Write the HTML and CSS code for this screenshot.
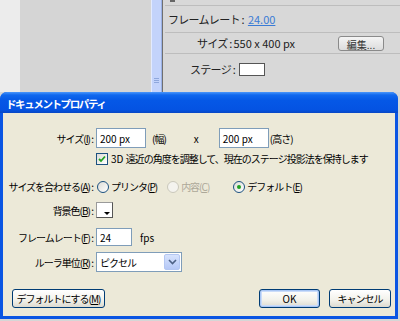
FILE: index.html
```html
<!DOCTYPE html>
<html lang="ja">
<head>
    <meta charset="UTF-8">
    <title>ドキュメントプロパティ</title>
    <link rel="stylesheet" href="styles.css">
</head>
<body>

    <div class="desk">
        <div class="strip"></div>
        <div class="side"></div>
        <div class="scroll"><span class="grip"></span></div>
        <div class="divider"></div>
        <div class="props">
            <div class="prop-head"><span class="head-mark"></span></div>
            <div class="prop-row rate">フレームレート : <a class="link">24.00</a></div>
            <div class="prop-row size">
                <span class="size-text">サイズ : <span class="num">550 x 400 px</span></span>
                <button class="edit">編集...</button>
            </div>
            <div class="prop-row stage">ステージ : <span class="stage-box"></span></div>
        </div>
    </div>

    <div class="dialog">
        <div class="titlebar">ドキュメントプロパティ</div>
        <div class="body">
            <div class="row r-size">
                <span class="lbl">サイズ(<u>I</u>) :</span>
                <span class="field w50">200 px</span>
                <span class="unit">(幅)</span>
                <span class="times">x</span>
                <span class="field w50">200 px</span>
                <span class="unit2">(高さ)</span>
            </div>
            <div class="row r-check">
                <span class="check"><svg width="8" height="8" viewBox="0 0 8 8"><path d="M1 4 L3 6 L7 1.5" fill="none" stroke="#21a121" stroke-width="1.8"/></svg></span>
                <span><span class="num">3D </span>遠近の角度を調整して、現在のステージ投影法を保持します</span>
            </div>
            <div class="row r-fit">
                <span class="lbl">サイズを合わせる(<u>A</u>) :</span>
                <span class="radio"></span><span class="opt">プリンタ(<u>P</u>)</span>
                <span class="radio off"></span><span class="opt dim">内容(<u>C</u>)</span>
                <span class="radio on"></span><span class="opt">デフォルト(<u>E</u>)</span>
            </div>
            <div class="row r-bg">
                <span class="lbl">背景色(<u>B</u>) :</span>
                <span class="swatch"><span class="tri"></span></span>
            </div>
            <div class="row r-fps">
                <span class="lbl">フレームレート(<u>F</u>) :</span>
                <span class="field w36">24</span>
                <span class="fps">fps</span>
            </div>
            <div class="row r-ruler">
                <span class="lbl">ルーラ単位(<u>R</u>) :</span>
                <span class="select">ピクセル
                    <span class="drop"><svg width="9" height="6" viewBox="0 0 9 6"><path d="M1 1 L4.5 4.5 L8 1" fill="none" stroke="#4d6185" stroke-width="1.6"/></svg></span>
                </span>
            </div>
            <div class="buttons">
                <button class="btn w-def">デフォルトにする(<u>M</u>)</button>
                <span class="spacer"></span>
                <button class="btn ok">OK</button>
                <button class="btn cancel">キャンセル</button>
            </div>
        </div>
    </div>

</body>
</html>
```

FILE: styles.css
```css
* {
    box-sizing: border-box;
}
body {
    margin: 0;
    width: 400px;
    height: 321px;
    overflow: hidden;
    background-color: #d6d6d6;
    font-family: "Noto Sans CJK JP", sans-serif;
    font-size: 10px;
    letter-spacing: -1px;
    color: #000;
}
u {
    text-decoration: underline;
}
.num {
    letter-spacing: 0;
}

/* fondo: panel de propiedades */
.desk {
    display: flex;
    height: 92px;
}
.strip {
    width: 20px;
    background-color: #ececec;
}
.side {
    width: 131px;
    background-color: #d5d5d5;
}
.scroll {
    width: 11px;
    background-color: #c3d3fb;
    border-left: 1px solid #e2eaff;
    border-right: 1px solid #9bb2e6;
    display: flex;
    justify-content: center;
    align-items: flex-end;
    padding-bottom: 9px;
}
.grip {
    width: 5px;
    height: 5px;
    border-top: 1px solid #8ea7dc;
    border-bottom: 1px solid #8ea7dc;
    background: linear-gradient(#c3d3fb 1px, #8ea7dc 1px, #8ea7dc 2px, #c3d3fb 2px);
}
.divider {
    width: 3px;
    background-color: #d8d8d8;
    border-left: 1px solid #707070;
}
.props {
    flex: 1;
    background-color: #d8d8d8;
    color: #222;
    font-size: 11px;
    letter-spacing: -0.7px;
}
.prop-head {
    height: 6px;
    border-bottom: 1px solid #bdbdbd;
    padding-left: 5px;
}
.head-mark {
    display: block;
    width: 5px;
    height: 2px;
    background-color: #666;
}
.prop-row {
    display: flex;
    align-items: center;
    border-bottom: 1px solid #bdbdbd;
}
.rate {
    height: 27px;
    padding-left: 3px;
}
.link {
    color: #3a7bd5;
    text-decoration: underline;
    margin-left: 4px;
    letter-spacing: 0;
}
.size {
    height: 21px;
    padding-left: 32px;
    padding-right: 16px;
    justify-content: space-between;
}
.edit {
    font-family: inherit;
    font-size: 10px;
    letter-spacing: 0;
    width: 46px;
    height: 15px;
    padding: 0;
    background: linear-gradient(#f4f4f4, #dcdcdc);
    border: 1px solid #8a8a8a;
    border-radius: 3px;
    color: #333;
}
.stage {
    border-bottom: none;
    height: 30px;
    padding-left: 25px;
}
.stage-box {
    width: 26px;
    height: 13px;
    margin-left: 4px;
    background-color: #fff;
    border: 1px solid #555;
}

/* ventana de dialogo */
.dialog {
    width: 398px;
    height: 227px;
    background-color: #0a55e3;
    border-radius: 7px 7px 0 0;
    display: flex;
    flex-direction: column;
    padding: 0 3px 3px;
}
.titlebar {
    height: 21px;
    margin: 0 -3px;
    padding-left: 6px;
    padding-top: 2px;
    border-radius: 7px 7px 0 0;
    background: linear-gradient(#4a97fb, #1068ee 3px, #0558e6 40%, #0453e2 85%, #0847c4);
    color: #fff;
    font-weight: bold;
    font-size: 10.5px;
    letter-spacing: -1.4px;
    display: flex;
    align-items: center;
}
.body {
    flex: 1;
    background-color: #ece9d8;
    padding-top: 15px;
}
.row {
    display: flex;
    align-items: center;
}
.lbl {
    width: 90px;
    margin-right: 3px;
    text-align: right;
    white-space: nowrap;
}
.field {
    height: 20px;
    background-color: #fff;
    border: 1px solid #7f9db9;
    padding-left: 3px;
    display: flex;
    align-items: center;
    letter-spacing: 0;
}
.w50 {
    width: 50px;
}
.w36 {
    width: 36px;
    height: 18px;
}
.unit {
    margin-left: 6px;
}
.times {
    margin-left: 28px;
    margin-right: 21px;
}
.unit2 {
    margin-left: 1px;
}
.r-size {
    height: 20px;
}
.r-check {
    margin-top: 4px;
    height: 13px;
    padding-left: 93px;
}
.check {
    width: 12px;
    height: 12px;
    margin-right: 3px;
    border: 1px solid #1c5180;
    background: linear-gradient(135deg, #dcdcd6, #fff);
    display: flex;
    align-items: center;
    justify-content: center;
}
.r-fit {
    margin-top: 15px;
    height: 13px;
}
.radio {
    width: 12px;
    height: 12px;
    margin-left: 1px;
    margin-right: 2px;
    border: 1px solid #1c5180;
    border-radius: 50%;
    background: linear-gradient(135deg, #dcdcd6, #fff);
    display: flex;
    align-items: center;
    justify-content: center;
}
.radio.off {
    border-color: #cac8bb;
    background: #f4f3ee;
    margin-left: 10px;
}
.radio.on {
    margin-left: 24px;
}
.radio.on::after {
    content: "";
    width: 4px;
    height: 4px;
    border-radius: 50%;
    background-color: #21a121;
}
.dim {
    color: #aca899;
}
.r-bg {
    margin-top: 9px;
    height: 16px;
}
.swatch {
    width: 17px;
    height: 16px;
    background-color: #fff;
    border: 1px solid #9a9a9a;
    border-right-color: #555;
    border-bottom-color: #555;
    position: relative;
}
.tri {
    position: absolute;
    right: 2px;
    bottom: 2px;
    border-left: 3px solid transparent;
    border-right: 3px solid transparent;
    border-top: 3px solid #000;
}
.r-fps {
    margin-top: 10px;
    height: 18px;
}
.fps {
    margin-left: 8px;
    letter-spacing: 0;
}
.r-ruler {
    margin-top: 6px;
    height: 20px;
}
.select {
    width: 86px;
    height: 20px;
    background-color: #fff;
    border: 1px solid #7f9db9;
    padding-left: 3px;
    display: flex;
    align-items: center;
    justify-content: space-between;
}
.drop {
    width: 16px;
    height: 16px;
    margin-right: 1px;
    background: linear-gradient(#d7e3fd, #b5c8f6);
    border: 1px solid #b4c7f2;
    border-radius: 2px;
    display: flex;
    align-items: center;
    justify-content: center;
}
.buttons {
    display: flex;
    margin-top: 17px;
    padding: 0 4px 0 9px;
}
.spacer {
    flex: 1;
}
.btn {
    font-family: inherit;
    font-size: 10px;
    letter-spacing: -1px;
    height: 19px;
    padding: 0;
    background: linear-gradient(#ffffff, #f2f1ea 60%, #dcdad0);
    border: 1px solid #003c74;
    border-radius: 3px;
    color: #000;
}
.w-def {
    width: 93px;
}
.ok {
    width: 61px;
    box-shadow: inset 0 0 0 1px #a9c6f4, inset 0 0 0 2px #cbdcf9;
    letter-spacing: 0;
}
.cancel {
    width: 62px;
    margin-left: 9px;
}
```
